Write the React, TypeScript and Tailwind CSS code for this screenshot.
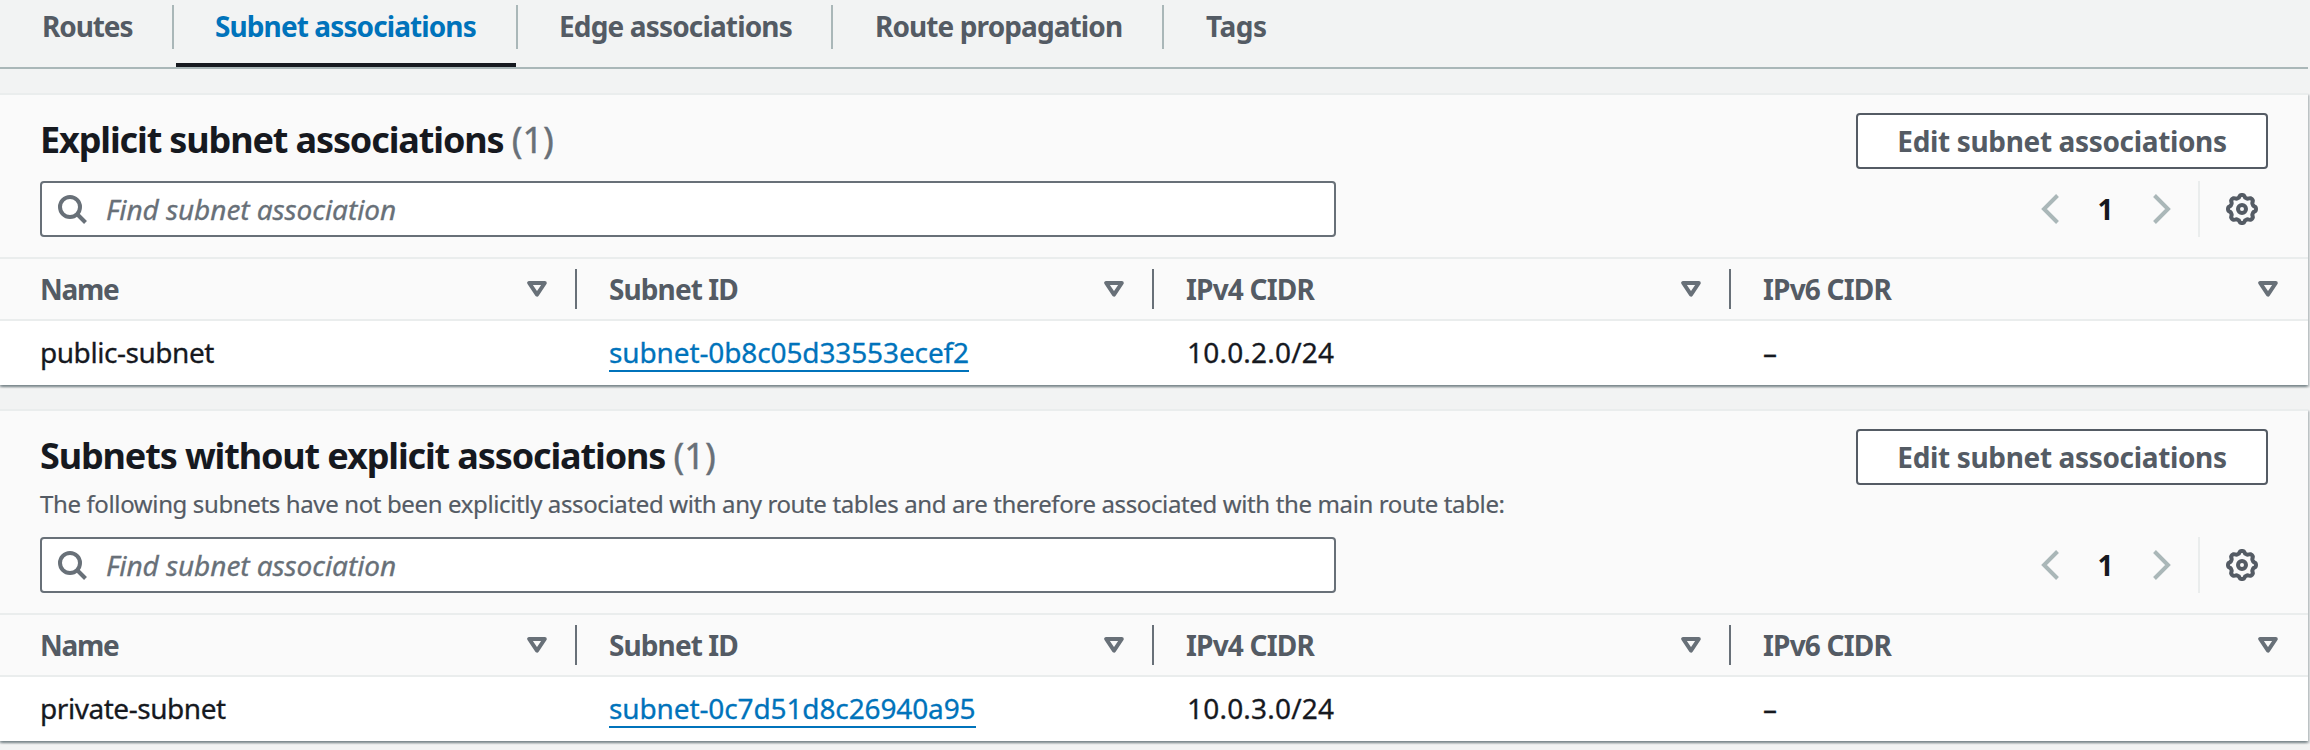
import React from 'react';

const tabs = [
  { label: 'Routes', box: 'w-[174px] pl-[42px]', track: 'tracking-[-1.1px]' },
  { label: 'Subnet associations', box: 'w-[344px] pl-[41px]', track: 'tracking-[-0.9px]' },
  { label: 'Edge associations', box: 'w-[315px] pl-[41px]', track: 'tracking-[-0.85px]' },
  { label: 'Route propagation', box: 'w-[331px] pl-[42px]', track: 'tracking-[-0.9px]' },
  { label: 'Tags', box: 'w-[200px] pl-[42px]', track: 'tracking-[-0.5px]' },
];

function Tabs() {
  return (
    <nav className="flex h-[69px] w-[2308px] border-b-2 border-[#aab7b8] pt-[5px] text-[28px] font-bold text-[#545b64]">
      {tabs.map((tab, i) => {
        const active = i === 1;
        return (
          <div key={tab.label} className={`${tab.box} ${tab.track} relative h-[62px]`}>
            <div className={`leading-[43px] whitespace-nowrap ${active ? 'text-[#0073bb]' : ''}`}>{tab.label}</div>
            {i < tabs.length - 1 && <span className="absolute top-0 right-0 h-[44px] w-[2px] bg-[#aab7b8]" />}
            {active && <span className="absolute right-[2px] bottom-0 left-[2px] h-[4px] bg-[#16191f]" />}
          </div>
        );
      })}
    </nav>
  );
}

function SearchIcon() {
  return (
    <svg width="32" height="32" viewBox="0 0 32 32" fill="none" stroke="#687078" strokeWidth="4">
      <circle cx="14" cy="14" r="10" />
      <path d="M21 21 L29.5 29.5" />
    </svg>
  );
}

// Eight rounded teeth around a circle.
const gearPath =
  Array.from({ length: 96 }, (_, i) => {
    const a = (i / 96) * Math.PI * 2;
    const r = 12.8 + 1.25 * Math.tanh(1.8 * Math.cos(8 * a));
    return `${i ? 'L' : 'M'}${(16 + r * Math.cos(a)).toFixed(2)} ${(16 + r * Math.sin(a)).toFixed(2)}`;
  }).join(' ') + 'Z';

function GearIcon() {
  return (
    <svg width="32" height="32" viewBox="0 0 32 32" fill="none" stroke="#545b64" strokeWidth="4" strokeLinejoin="round">
      <path d={gearPath} />
      <circle cx="16" cy="16" r="4" />
    </svg>
  );
}

function Chevron({ d }: { d: string }) {
  return (
    <svg width="20" height="32" viewBox="0 0 20 32" fill="none" stroke="#aab7b8" strokeWidth="4">
      <path d={d} />
    </svg>
  );
}

function SortIcon() {
  return (
    <svg width="20" height="16" viewBox="0 0 20 16" fill="none" stroke="#687078" strokeWidth="4" strokeLinejoin="round">
      <path d="M2.2 2 H17.8 L10 13.6 Z" />
    </svg>
  );
}

const columns = [
  { label: 'Name', box: 'w-[577px] pl-[40px]', track: 'tracking-[-1.3px]' },
  { label: 'Subnet ID', box: 'w-[577px] pl-[32px]', track: 'tracking-[-0.9px]' },
  { label: 'IPv4 CIDR', box: 'w-[577px] pl-[32px]', track: 'tracking-[-0.8px]' },
  { label: 'IPv6 CIDR', box: 'w-[577px] pl-[32px]', track: 'tracking-[-0.8px]' },
];

type PanelProps = {
  title: string;
  description?: string;
  name: string;
  id: string;
  cidr: string;
};

function Panel({ title, description, name, id, cidr }: PanelProps) {
  return (
    <section className="w-[2308px] border-t-2 border-[#eaeded] bg-white shadow-[0_2px_2px_rgba(0,28,36,0.3),2px_2px_2px_rgba(0,28,36,0.15),-2px_2px_2px_rgba(0,28,36,0.15)]">
      <div className="border-b-2 border-[#eaeded] bg-[#fafafa] pt-[18px] pr-[40px] pb-[20px] pl-[40px]">
        <div className="flex items-start justify-between">
          <div>
            <h2 className="h-[52px] text-[36px] leading-[54px] font-bold tracking-[-1.13px] whitespace-nowrap text-[#16191f]">
              {title} <span className="font-normal tracking-normal text-[#687078] [-webkit-text-stroke:0.4px]">(1)</span>
            </h2>
            {description && (
              <p className="mt-[5px] text-[24px] leading-[36px] tracking-[-0.37px] whitespace-nowrap text-[#545b64] [-webkit-text-stroke:0.2px]">
                {description}
              </p>
            )}
          </div>
          <button className="h-[56px] w-[412px] rounded-[4px] border-2 border-[#545b64] bg-white text-[28px] leading-[52px] font-bold tracking-[-0.35px] whitespace-nowrap text-[#545b64]">
            Edit subnet associations
          </button>
        </div>
        <div className={`flex items-center justify-between ${description ? 'mt-[15px]' : 'mt-[12px]'}`}>
          <div className="flex h-[56px] w-[1296px] items-center rounded-[4px] border-2 border-[#687078] bg-white pl-[14px]">
            <SearchIcon />
            <span className="ml-[18px] text-[28px] leading-[52px] tracking-[-0.07px] text-[#687078] italic [-webkit-text-stroke:0.3px]">
              Find subnet association
            </span>
          </div>
          <div className="flex h-[56px] items-center">
            <Chevron d="M17.5 2.5 L4 16 L17.5 29.5" />
            <span className="w-[92px] pr-[1px] text-center text-[28px] font-bold text-[#16191f]">1</span>
            <Chevron d="M2.5 2.5 L16 16 L2.5 29.5" />
            <span className="ml-[26px] h-[56px] w-[2px] bg-[#eaeded]" />
            <span className="mr-[10px] ml-[26px]">
              <GearIcon />
            </span>
          </div>
        </div>
      </div>
      <div className="flex h-[62px] items-center border-b-2 border-[#eaeded] bg-[#fafafa] text-[28px] font-bold text-[#545b64]">
        {columns.map((c, i) => (
          <div
            key={c.label}
            className={`${c.box} ${c.track} flex h-[40px] shrink-0 items-center justify-between pr-[28px] ${
              i < 3 ? 'border-r-2 border-[#687078]' : 'border-r-2 border-transparent'
            }`}
          >
            <span>{c.label}</span>
            <SortIcon />
          </div>
        ))}
      </div>
      <div className="flex h-[64px] items-center text-[28px] leading-[38px] tracking-[-0.45px] text-[#16191f] [-webkit-text-stroke:0.3px]">
        <div className="w-[577px] pb-[2px] pl-[40px]">{name}</div>
        <div className="w-[577px] pl-[32px]">
          <a className="block w-fit border-b-2 border-[#0073bb] leading-[36px] tracking-[-0.12px] text-[#0073bb]">{id}</a>
        </div>
        <div className="w-[577px] pb-[2px] pl-[33px] tracking-[0.2px]">{cidr}</div>
        <div className="w-[577px] pb-[2px] pl-[32px]">–</div>
      </div>
    </section>
  );
}

export default function App() {
  return (
    <main className="h-[750px] w-[2310px] overflow-hidden bg-[#f2f3f3] font-['Noto_Sans',sans-serif]">
      <Tabs />
      <div className="mt-[24px] flex flex-col gap-[24px]">
        <Panel title="Explicit subnet associations" name="public-subnet" id="subnet-0b8c05d33553ecef2" cidr="10.0.2.0/24" />
        <Panel
          title="Subnets without explicit associations"
          description="The following subnets have not been explicitly associated with any route tables and are therefore associated with the main route table:"
          name="private-subnet"
          id="subnet-0c7d51d8c26940a95"
          cidr="10.0.3.0/24"
        />
      </div>
    </main>
  );
}
